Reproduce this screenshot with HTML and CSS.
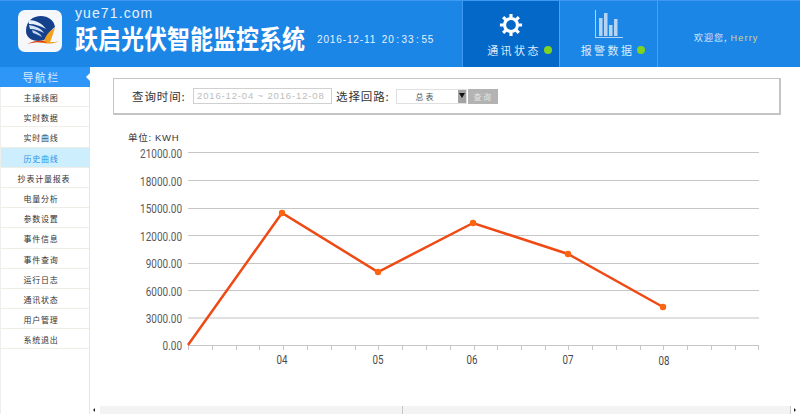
FILE: index.html
```html
<!DOCTYPE html>
<html>
<head>
  <meta charset="utf-8">
  <title>跃启光伏智能监控系统</title>
  <link rel="stylesheet" href="styles.css">
</head>
<body>
<div class="header">
  <div class="logo">
    <svg width="44" height="42" viewBox="0 0 44 42">
      <path d="M8 21C8 11 15 6 23 6c7 0 13 4 14 11-3 2-6 6-8 11-2 2-5 3-8 3C13 31 8 27 8 21z" fill="#14408c"/>
      <path d="M10 10c7 0 14 3 18 9-5-3-11-5-17-5z" fill="#e8f0fa"/>
      <path d="M11 15c6 1 12 3 15 8-4-2-9-4-14-4z" fill="#d3e2f5"/>
      <path d="M14 20c4 1 8 3 10 7-3-2-6-3-9-4z" fill="#c2d6f0"/>
      <path d="M9 34c6-3 12-4 17-3 2-6 6-11 11-13-2 5-3 10-5 14 4 0 7 0 9-1-5 3-11 3-15 2-6-1-11-1-17 1z" fill="#f2a11f"/>
      <path d="M9 34c6-3 12-4 17-3l3 2c-7-1-13-1-20 1z" fill="#dc3c1e"/>
    </svg>
  </div>
  <div class="brand">
    <div class="site">yue71.com</div>
    <div class="title">跃启光伏智能监控系统</div>
  </div>
  <div class="clock"><span class="clock-date">2016-12-11</span> 20 : 33 : 55</div>
  <div class="tab tab-on">
    <svg class="tab-icon" width="24" height="24" viewBox="0 0 26 26">
      <g stroke="#fff" stroke-width="3.4">
        <circle cx="13" cy="13" r="7" fill="none"/>
        <path d="M13 1v4M13 21v4M1 13h4M21 13h4M4.500 4.500l3 3M18.500 18.500l3 3M21.500 4.500l-3 3M7.500 18.500l-3 3"/>
      </g>
    </svg>
    <div class="tab-label">通讯状态<span class="dot"></span></div>
  </div>
  <div class="tab">
    <svg class="tab-icon" width="28" height="28" viewBox="0 0 28 28">
      <path d="M0 0v28h28v-1H1V0z" fill="#b5d3f3"/>
      <path d="M4 8h3.500v18H4zM9 3h3.500v23H9zM14 15h3.500v11H14zM19 9h3.500v17H19z" fill="#b5d3f3"/>
    </svg>
    <div class="tab-label">报警数据<span class="dot"></span></div>
  </div>
  <div class="welcome">欢迎您, <span class="user">Herry</span></div>
</div>

<div class="wrap">
  <div class="side">
    <div class="side-head">导航栏</div>
    <div class="side-item">主接线图</div>
    <div class="side-item">实时数据</div>
    <div class="side-item">实时曲线</div>
    <div class="side-item active">历史曲线</div>
    <div class="side-item wide">抄表计量报表</div>
    <div class="side-item">电量分析</div>
    <div class="side-item">参数设置</div>
    <div class="side-item">事件信息</div>
    <div class="side-item">事件查询</div>
    <div class="side-item">运行日志</div>
    <div class="side-item">通讯状态</div>
    <div class="side-item">用户管理</div>
    <div class="side-item">系统退出</div>
  </div>

  <div class="main">
    <div class="content">
      <div class="query">
        <span class="q-label">查询时间:</span>
        <span class="q-date">2016-12-04 ~ 2016-12-08</span>
        <span class="q-label">选择回路:</span>
        <span class="q-select"><span class="q-value">总表</span><span class="q-arrow"></span></span>
        <span class="q-btn">查询</span>
      </div>
      <svg class="chart" width="710" height="284" viewBox="90 122 710 284">
        <text class="unit" x="128" y="141">单位: KWH</text>
        <g class="grid">
          <path d="M188 152.500H759M188 180.500H759M188 208.500H759M188 235.500H759M188 263.500H759M188 290.500H759"/>
          <path class="grid-light" d="M188 318H759"/>
          <path d="M188 345.500H759"/>
          <path d="M188.500 345v5M212.500 345v5M236.500 345v5M259.500 345v5M283.500 345v5M307.500 345v5M331.500 345v5M355.500 345v5M378.500 345v5M402.500 345v5M426.500 345v5M450.500 345v5M474.500 345v5M497.500 345v5M521.500 345v5M545.500 345v5M568.500 345v5M592.500 345v5M616.500 345v5M640.500 345v5M663.500 345v5M687.500 345v5M711.500 345v5M735.500 345v5M758.500 345v5"/>
        </g>
        <g class="y-labels" transform="translate(182 0) scale(.8 1) translate(-182 0)">
          <text x="182" y="158">21000.00</text>
          <text x="182" y="186">18000.00</text>
          <text x="182" y="213">15000.00</text>
          <text x="182" y="241">12000.00</text>
          <text x="182" y="268">9000.00</text>
          <text x="182" y="296">6000.00</text>
          <text x="182" y="323">3000.00</text>
          <text x="182" y="350">0.00</text>
        </g>
        <g class="x-labels">
          <text x="282" y="364" textLength="11" lengthAdjust="spacingAndGlyphs">04</text>
          <text x="378" y="364" textLength="11" lengthAdjust="spacingAndGlyphs">05</text>
          <text x="472" y="364" textLength="11" lengthAdjust="spacingAndGlyphs">06</text>
          <text x="568" y="364" textLength="11" lengthAdjust="spacingAndGlyphs">07</text>
          <text x="664" y="365" textLength="11" lengthAdjust="spacingAndGlyphs">08</text>
        </g>
        <polyline class="line" points="188,345 282,213 378,272 473,223 568,254 663,307"/>
        <g class="points">
          <circle cx="282" cy="213" r="3.200"/>
          <circle cx="378" cy="272" r="3.200"/>
          <circle cx="473" cy="223" r="3.200"/>
          <circle cx="568" cy="254" r="3.200"/>
          <circle cx="663" cy="307" r="3.200"/>
        </g>
      </svg>
    </div>
    <div class="hscroll">
      <span class="sc-left"></span>
      <span class="sc-track"></span>
      <span class="sc-right"></span>
    </div>
  </div>
</div>
</body>
</html>
```

FILE: styles.css
```css
* {
  box-sizing: border-box;
}

html, body {
  margin: 0;
  height: 414px;
  overflow: hidden;
  background: #fff;
  font-family: "Liberation Sans", "Noto Sans CJK SC", sans-serif;
}

/* header */
.header {
  display: flex;
  height: 67px;
  background: #1c86e6;
  border-top: 1px solid #3d9af0;
  color: #fff;
}

.logo {
  width: 44px;
  height: 42px;
  margin: 9px 0 0 18px;
  background: #f5f7fa;
  border-radius: 7px;
}

.logo svg {
  display: block;
}

.brand {
  width: 242px;
  margin-left: 13px;
}

.site {
  height: 17px;
  margin-top: 4px;
  font-size: 14px;
  line-height: 17px;
  letter-spacing: 1.1px;
  color: #e6f1fc;
}

.title {
  width: 240px;
  margin-top: 3px;
  font-family: "Noto Sans CJK SC", sans-serif;
  font-size: 23px;
  line-height: 24px;
  font-weight: 700;
  white-space: nowrap;
  transform: scaleY(1.15);
  transform-origin: left center;
}

.clock {
  width: 145px;
  padding-top: 32px;
  font-size: 10px;
  line-height: 13px;
  letter-spacing: 0.87px;
  word-spacing: -2px;
  color: #e6f1fc;
  white-space: nowrap;
}

.clock-date {
  margin-right: 4px;
}

.tab {
  display: flex;
  flex-direction: column;
  align-items: center;
  width: 98px;
  border-left: 1px solid #4ba2f0;
}

.tab-on {
  width: 97px;
  background: #0468c8;
  border-left-color: #3d9af0;
}

.tab-icon {
  display: block;
  height: 28px;
  margin-top: 9px;
  flex: none;
}

.tab-on .tab-icon {
  margin-top: 12px;
  height: 24px;
}

.tab-label {
  display: flex;
  align-items: center;
  margin-top: 4px;
  padding-left: 9px;
  font-family: "Noto Sans CJK SC", sans-serif;
  font-size: 11px;
  line-height: 16px;
  letter-spacing: 2.4px;
  color: #dcebfb;
}

.tab-on .tab-label {
  margin-top: 5px;
  padding-left: 17px;
}

.dot {
  width: 8px;
  height: 8px;
  margin-left: 3px;
  background: #7ed321;
  border-radius: 50%;
}

.welcome {
  flex: 1;
  padding: 29px 0 0 36px;
  border-left: 1px solid #4ba2f0;
  font-family: "Noto Sans CJK SC", sans-serif;
  font-size: 9px;
  line-height: 16px;
  letter-spacing: 1px;
  color: #dcebfb;
  white-space: nowrap;
}

.user {
  color: #d9d77e;
  font-family: "Liberation Sans", sans-serif;
  letter-spacing: 1.2px;
}

/* sidebar */
.wrap {
  display: flex;
  height: 347px;
}

.side {
  width: 90px;
  flex: none;
  background: #fff;
  border-left: 1px solid #eeeeea;
  border-right: 1px solid #e6e6e0;
  font-family: "Noto Sans CJK SC", sans-serif;
}

.side-head {
  position: relative;
  height: 20px;
  margin: 0 -1px;
  padding-right: 8px;
  background: #2e96f7;
  color: #d8ebfd;
  font-size: 11px;
  line-height: 20px;
  letter-spacing: 1.3px;
  text-align: center;
}

.side-head:after {
  content: "";
  position: absolute;
  right: 0;
  top: 6px;
  border: 4px solid transparent;
  border-left: 0;
  border-right-color: #fff;
}

.side-item {
  height: 20.2px;
  padding-right: 8px;
  border-bottom: 1px solid #eeeee6;
  font-size: 8px;
  line-height: 21px;
  letter-spacing: 0.8px;
  color: #333;
  text-align: center;
  white-space: nowrap;
}

.side-item.wide {
  padding-right: 2px;
}

.side-item.active {
  background: #cdeefc;
  color: #2a93ea;
}

/* main */
.main {
  flex: 1;
  display: flex;
  flex-direction: column;
  min-width: 0;
}

.content {
  flex: 1;
  min-height: 0;
}

.query {
  display: flex;
  align-items: center;
  width: 668px;
  height: 37px;
  margin: 11px 0 0 23px;
  padding-left: 18px;
  border: 1px solid #c4c4c4;
  border-bottom-width: 2px;
  border-right-width: 2px;
  font-family: "Noto Sans CJK SC", sans-serif;
  font-size: 11px;
}

.q-label {
  width: 61px;
  flex: none;
  font-size: 11.500px;
  letter-spacing: 0.9px;
  color: #333;
  white-space: nowrap;
}

.q-date {
  width: 139px;
  height: 16px;
  margin-right: 4px;
  padding-left: 3px;
  border: 1px solid #d0d0d0;
  font-family: "Liberation Sans", sans-serif;
  font-size: 9.500px;
  line-height: 14px;
  letter-spacing: 0.85px;
  color: #bdbdbd;
  white-space: nowrap;
}

.q-select {
  display: flex;
  width: 71px;
  height: 15px;
  margin: 0 1px 0 -1px;
  border: 1px solid #e0e0e0;
}

.q-value {
  flex: 1;
  padding-right: 4px;
  font-size: 8px;
  line-height: 14px;
  letter-spacing: 2px;
  color: #555;
  text-align: center;
}

.q-arrow {
  position: relative;
  width: 8px;
  background: #a3a3a3;
}

.q-arrow:after {
  content: "";
  position: absolute;
  left: 1px;
  top: 3px;
  border: 3px solid transparent;
  border-top: 5px solid #111;
  border-bottom: 0;
}

.q-btn {
  width: 30px;
  height: 15px;
  background: #b3b3b3;
  color: #e4e4e4;
  font-size: 8px;
  line-height: 15px;
  letter-spacing: 1.5px;
  text-align: center;
}

/* chart */
.chart {
  display: block;
  margin-top: 7px;
  font-family: "Roboto", "Liberation Sans", sans-serif;
}

.chart .unit {
  font-family: "Liberation Sans", "Noto Sans CJK SC", sans-serif;
  font-size: 9.500px;
  letter-spacing: 0.7px;
  fill: #333;
}

.grid path {
  fill: none;
  stroke: #c6c6c6;
  stroke-width: 1;
}

.grid .grid-light {
  stroke: #e0e0e0;
  stroke-width: 2;
}

.y-labels text {
  font-size: 12.500px;
  fill: #5a5a5a;
  text-anchor: end;
}

.x-labels text {
  font-size: 12px;
  fill: #4a4a4a;
  text-anchor: middle;
}

.line {
  fill: none;
  stroke: #ef4a14;
  stroke-width: 2.500;
}

.points circle {
  fill: #fb6510;
}

/* bottom scrollbar */
.hscroll {
  display: flex;
  height: 8px;
  flex: none;
}

.sc-left {
  position: relative;
  width: 10px;
  background: #fff;
}

.sc-left:after {
  content: "";
  position: absolute;
  left: 3px;
  top: 2px;
  border: 2px solid transparent;
  border-left: 0;
  border-right-color: #222;
}

.sc-track {
  flex: 1;
  background: linear-gradient(to right, #f3f3f3 302px, #c8c8c8 302px, #c8c8c8 303px, #f3f3f3 303px);
}

.sc-right {
  position: relative;
  width: 10px;
  background: #fff;
  border-left: 1px solid #c8c8c8;
}

.sc-right:after {
  content: "";
  position: absolute;
  left: 3px;
  top: 2px;
  border: 2px solid transparent;
  border-right: 0;
  border-left-color: #222;
}
```
